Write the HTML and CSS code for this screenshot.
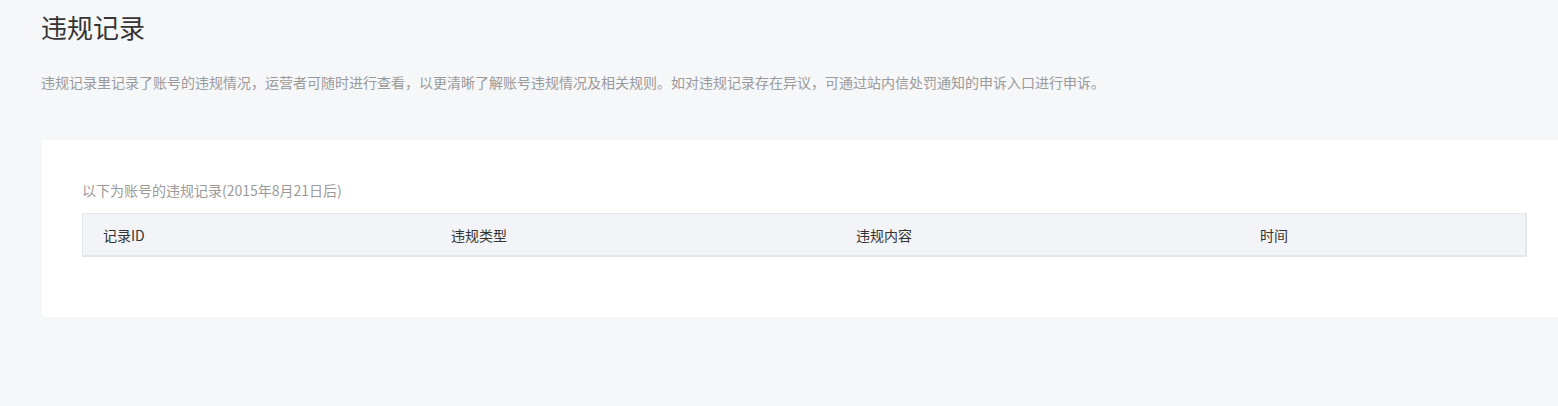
FILE: index.html
```html
<!DOCTYPE html>
<html lang="zh-CN">
<head>
    <meta charset="UTF-8">
    <meta name="viewport" content="width=device-width, initial-scale=1.0">
    <title>违规记录</title>
    <link rel="stylesheet" href="styles.css">
</head>
<body>
    <div class="page">
        <!-- 页面标题 -->
        <div class="title">违规记录</div>
        <p class="desc">违规记录里记录了账号的违规情况，运营者可随时进行查看，以更清晰了解账号违规情况及相关规则。如对违规记录存在异议，可通过站内信处罚通知的申诉入口进行申诉。</p>

        <!-- 记录列表 -->
        <div class="card">
            <div class="tips">以下为账号的违规记录(2015年8月21日后)</div>
            <table class="record-table">
                <thead>
                    <tr>
                        <th class="col-id">记录ID</th>
                        <th class="col-type">违规类型</th>
                        <th class="col-content">违规内容</th>
                        <th>时间</th>
                    </tr>
                </thead>
            </table>
        </div>
    </div>
</body>
</html>
```

FILE: styles.css
```css
body {
    font-family: "Noto Sans CJK SC", "Liberation Sans", sans-serif;
    margin: 0;
    background-color: #f6f7f9;
    color: #333;
    overflow: hidden;
}

.page {
    padding: 0 0 0 41px;
    width: 1526px;
}

.title {
    font-size: 26px;
    line-height: 36px;
    padding-top: 9px;
    color: #353535;
}

.desc {
    margin: 26px 0 0;
    font-size: 14px;
    line-height: 22px;
    color: #9a9a9a;
}

.card {
    margin: 47px 0 0 1px;
    padding: 40px 40px 60px;
    background-color: #fff;
    border-radius: 3px;
    box-shadow: 0 1px 2px rgba(0, 0, 0, 0.02);
}

.tips {
    font-size: 14px;
    line-height: 20px;
    color: #9a9a9a;
    margin-bottom: 13px;
}

.record-table {
    width: 100%;
    border-collapse: collapse;
    table-layout: fixed;
}

.record-table th {
    background-color: #f3f4f7;
    border: 1px solid #e4e6eb;
    border-bottom-width: 2px;
    border-left: none;
    border-right: none;
    text-align: left;
    font-weight: normal;
    font-size: 14px;
    color: #333;
    height: 41px;
    padding: 0 0 0 20px;
}

.record-table th:first-child {
    border-left: 1px solid #e4e6eb;
}

.record-table th:last-child {
    border-right: 2px solid #e4e6eb;
}

.col-id {
    width: 328px;
}

.col-type {
    width: 385px;
}

.col-content {
    width: 384px;
}
```
